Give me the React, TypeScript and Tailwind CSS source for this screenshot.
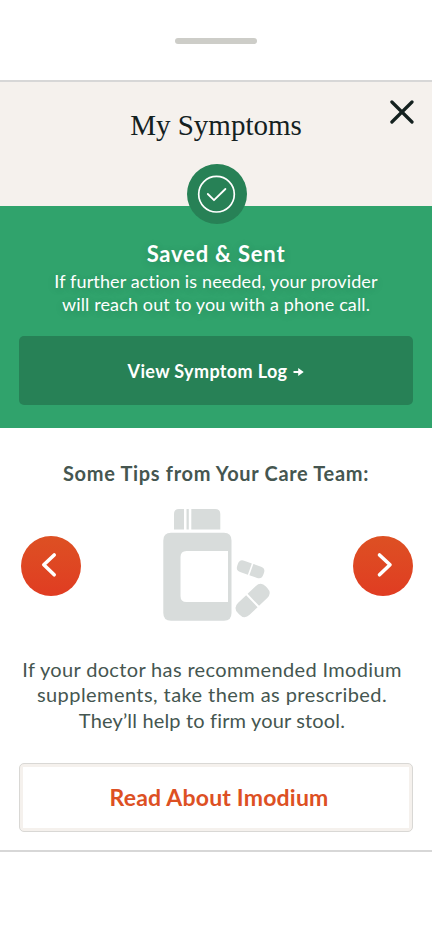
import React from 'react';

function CheckIcon() {
  return (
    <svg width="60" height="60" viewBox="0 0 60 60" fill="none" stroke="#fff">
      <circle cx="29.5" cy="30.2" r="17.8" strokeWidth="1.7" />
      <path d="M20.8 30L27 36.2L38.4 25" strokeWidth="1.8" strokeLinecap="round" strokeLinejoin="round" />
    </svg>
  );
}

function PillBottle() {
  return (
    <svg width="110" height="114" viewBox="162 508 110 114" fill="#d8dcdb">
      {/* cap */}
      <path d="M179 509H184V529.5H174V514Q174 509 179 509Z" />
      <path d="M186.5 509H188.8V529.5H186.5Z" />
      <path d="M191.3 509H215Q220.3 509 220.3 514V529.5H191.3Z" />
      {/* bottle with the label cut out */}
      <path
        fillRule="evenodd"
        d="M171 532.7H224Q231.5 532.7 231.5 540.5V613Q231.5 620.8 224 620.8H171Q163.3 620.8 163.3 613V540.5Q163.3 532.7 171 532.7ZM186.5 551Q180.5 551 180.5 557V596Q180.5 602 186.5 602H228V551Z"
      />
      {/* pills */}
      <g transform="translate(250.6 569.3) rotate(19.5)">
        <path d="M-9 -6H-0.8V6H-9Q-13.8 6 -13.8 1V-1Q-13.8 -6 -9 -6Z" />
        <path d="M0.8 -6H9Q13.8 -6 13.8 -1V1Q13.8 6 9 6H0.8Z" />
      </g>
      <g transform="translate(252.6 600.5) rotate(-43.5)">
        <path d="M-12 -8.3H-1V8.3H-12Q-19.3 8.3 -19.3 1V-1Q-19.3 -8.3 -12 -8.3Z" />
        <path d="M1 -8.3H12Q19.3 -8.3 19.3 -1V1Q19.3 8.3 12 8.3H1Z" />
      </g>
    </svg>
  );
}

function ArrowButton({ label, d }: { label: string; d: string }) {
  return (
    <button
      aria-label={label}
      className="mt-px h-[60px] w-[60px] rounded-full bg-linear-to-b from-[#dd5023] to-[#e03c22]"
    >
      <svg width="60" height="60" viewBox="0 0 60 60" fill="none" stroke="#fff" strokeWidth="3.6" strokeLinecap="round" strokeLinejoin="round">
        <path d={d} />
      </svg>
    </button>
  );
}

export default function App() {
  return (
    <div className="flex h-[932px] w-[432px] flex-col overflow-hidden bg-white font-['Lato','Liberation_Sans',sans-serif] text-[#455650]">
      {/* drag handle */}
      <div className="flex h-20 shrink-0 justify-center pt-[38px]">
        <div className="h-1.5 w-[82px] rounded-full bg-[#cdcdc8]" />
      </div>

      <main className="flex h-[772px] shrink-0 flex-col border-y-2 border-[#d7d7d7]">
        <header className="relative h-[124px] shrink-0 bg-[#f5f1ed] pt-[23px] text-center">
          <h1 className="font-['Liberation_Serif',serif] text-[29px] leading-10 text-[#14211f]">My Symptoms</h1>
          <button aria-label="Close" className="absolute top-[18px] right-[18px]">
            <svg width="24" height="24" viewBox="0 0 24 24" fill="none" stroke="#14211f" strokeWidth="3.2" strokeLinecap="round">
              <path d="M1.9 2L22 22M22 2L1.9 22" />
            </svg>
          </button>
          <div className="absolute top-[82px] left-[187px] h-[60px] w-[60px] rounded-full bg-[#278156]">
            <CheckIcon />
          </div>
        </header>

        <section className="flex h-[222px] shrink-0 flex-col bg-[#30a36c] px-[19px] pt-[34px] text-center text-white">
          <div className="[text-shadow:0_2px_10px_rgba(0,0,0,0.16)]">
            <h2 className="text-[22px] leading-7 font-bold tracking-[0.8px]">Saved &amp; Sent</h2>
            <p className="mt-0.5 text-[18px] leading-[23px] tracking-[0.13px]">
              If further action is needed, your provider
              <br />
              will reach out to you with a phone call.
            </p>
          </div>
          <button className="mt-5 flex h-[69px] w-[394px] items-center justify-center gap-1.5 rounded-[5px] bg-[#278156] pt-0.5">
            <span className="text-[18px] font-bold tracking-[0.36px]">View Symptom Log</span>
            <svg width="11" height="8" viewBox="0 0 11 8" fill="#fff">
              <path d="M0.5 2.9H5.2V0L10.7 4L5.2 8V5.1H0.5Z" />
            </svg>
          </button>
        </section>

        <section className="px-[19px] pt-[31px] text-center">
          <h3 className="text-[20px] leading-7 font-bold tracking-[0.67px]">Some Tips from Your Care Team:</h3>
          <div className="mt-[21px] flex h-[114px] items-center justify-between pl-0.5">
            <ArrowButton label="Previous tip" d="M33.2 19L22.8 28.8L33.2 38.8" />
            <PillBottle />
            <ArrowButton label="Next tip" d="M26.5 19L37 28.8L26.5 38.8" />
          </div>
          <p className="mt-[35px] -ml-2 text-[20px] leading-[25.4px]">
            <span className="tracking-[0.35px]">If your doctor has recommended Imodium</span>
            <br />
            <span className="tracking-[0.43px]">supplements, take them as prescribed.</span>
            <br />
            <span className="tracking-[0.16px]">They’ll help to firm your stool.</span>
          </p>
          <button className="mt-[30px] flex h-[69px] w-[394px] items-center justify-center rounded-[5px] border border-[#d9d8d5] bg-[#f5f1ed] p-[3px]">
            <span className="flex h-full w-full items-center justify-center bg-white pl-1.5 text-[23px] font-bold tracking-[0.2px] text-[#dd5023]">Read About Imodium</span>
          </button>
        </section>
      </main>
    </div>
  );
}
